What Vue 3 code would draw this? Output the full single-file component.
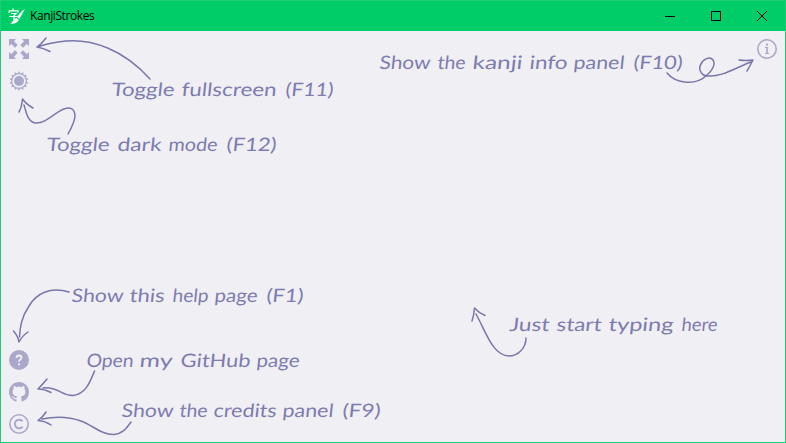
<script setup>
const leftTop = ['fullscreen', 'theme']
const leftBottom = ['help', 'github', 'credits']

// Each word is [text, left, width]
const notes = [
  { y: 95.6, words: [['Toggle', 111, 63], ['fullscreen', 181, 95], ['(F11)', 285, 48]] },
  { y: 150.6, words: [['Toggle', 46, 63], ['dark', 117, 44], ['mode', 168, 49], ['(F12)', 226, 50]] },
  { y: 68.6, words: [['Show', 379, 51], ['the', 437, 28], ['kanji', 472, 50], ['info', 529, 38], ['panel', 573, 51], ['(F10)', 633, 49]] },
  { y: 301.6, words: [['Show', 71, 52], ['this', 129, 35], ['help', 172, 36], ['page', 214, 43], ['(F1)', 266, 37]] },
  { y: 366.6, words: [['Open', 86, 47], ['my', 139, 33], ['GitHub', 180, 70], ['page', 256, 43]] },
  { y: 416.6, words: [['Show', 121, 52], ['the', 179, 28], ['credits', 213, 63], ['panel', 282, 51], ['(F9)', 342, 38]] },
  { y: 330.6, words: [['Just', 509, 40], ['start', 556, 45], ['typing', 608, 65], ['here', 681, 36]] },
]

const arrows = [
  'M150 79C123 49 92 39 66 41C56 42 46 44 37 47M46 38C43 42 40 45 37 47Q43 48 50 51.500',
  'M68 134C72 127 75 121 75 115C74 108 70 107 64 109C55 112 46 124 35 123C27 121 26 111 24 105M19 112C22 107 22 104 22.500 99Q26 104 33 108',
  'M667 73C676 84 696 86 707 75C712 71 716 64 713 60C710 56 703 59 701 64C698 69 701 76 708 76C722 77 735 68 751 62M739 60Q746 61 753 60Q750 66 747 71',
  'M69 292C50 286 36 294 29 306C21 318 20 328 19.500 337M13.500 331Q18 336 19 342Q22 336 28 332',
  'M94.500 371C90 382 86 394 73 395.500C62 396 57 386 43 388M47 379Q43 384 38 389Q44 389 51 392.500',
  'M131 422C126 429 122 434 114 434.500C102 435 94 426 81 421C70 417 57 416 42 419M46 412Q43 417 38 420.500Q45 421 51 425',
  'M526 338C526 348 518 356 509 356C493 356 486 332 476 314M472 321Q474 315 474.500 308Q479 313 485 315.500',
]
const rays = Array.from({ length: 14 }, (_, i) => (i * 360) / 14)
</script>

<template>
  <div class="window">
    <header class="titlebar">
      <svg class="logo" width="18" height="18" viewBox="0 0 18 18">
        <g fill="none" stroke="#fff" stroke-width="1.200">
          <path d="M5 .5V2.500M1.200 5V2.900H10V4.500M3 5.500H8L6 7.500V13Q6 14.500 3.500 14M1 8.500H9" />
        </g>
        <path d="M17 .8L11.300 11L8.800 9L13.500 3.500ZM8.300 10L10.800 12Q9 16 2 16Q5 14.500 5.700 12.500Q6.500 10 8.300 10Z" fill="#fff" />
      </svg>
      <span class="title">KanjiStrokes</span>
      <div class="controls">
        <button aria-label="Minimize"><svg width="10" height="10"><path d="M0 5.500H10" /></svg></button>
        <button aria-label="Maximize"><svg width="10" height="10"><path d="M.5.5H9.500V9.500H.5Z" /></svg></button>
        <button aria-label="Close"><svg width="10" height="10"><path d="M0 0L10 10M10 0L0 10" /></svg></button>
      </div>
    </header>

    <main class="content">
      <nav class="side">
        <div class="group">
          <button v-for="name in leftTop" :key="name" :aria-label="name">
            <svg v-if="name === 'fullscreen'" width="20" height="20" viewBox="0 0 20 20">
              <g v-for="a in [0, 90, 180, 270]" :key="a" :transform="`rotate(${a} 10 10)`">
                <path d="M0 0H7L5 2.300L8.700 6L6 8.700L2.300 5L0 7Z" fill="currentColor" />
              </g>
            </svg>
            <svg v-else width="20" height="20" viewBox="0 0 20 20">
              <circle cx="10" cy="10" r="5" fill="currentColor" />
              <circle cx="10" cy="10" r="7.400" fill="none" stroke="currentColor" stroke-width="1.100" />
              <path v-for="a in rays" :key="a" d="M8.600 2.700L10 .1L11.400 2.700Z" fill="currentColor" :transform="`rotate(${a} 10 10)`" />
            </svg>
          </button>
        </div>
        <div class="group">
          <button v-for="name in leftBottom" :key="name" :aria-label="name">
            <svg v-if="name === 'help'" width="20" height="20" viewBox="0 0 20 20">
              <circle cx="10" cy="10" r="10" fill="currentColor" />
              <path d="M7.500 7.900Q7.600 5.500 10 5.500Q12.500 5.500 12.500 7.600Q12.500 8.700 11 9.700Q10 10.300 10 11.800" fill="none" stroke="#f0eff4" stroke-width="1.800" />
              <circle cx="10" cy="14.300" r="1.150" fill="#f0eff4" />
            </svg>
            <svg v-else-if="name === 'github'" width="20" height="20" viewBox="0 0 16 16">
              <path fill="currentColor" d="M8 0C3.580 0 0 3.580 0 8c0 3.540 2.290 6.530 5.470 7.590.4.070.55-.17.55-.38 0-.19-.01-.82-.01-1.490-2.010.37-2.530-.49-2.690-.94-.09-.23-.48-.94-.82-1.130-.28-.15-.68-.52-.01-.53.63-.01 1.080.58 1.230.82.72 1.210 1.870.87 2.330.66.07-.52.28-.87.51-1.070-1.780-.2-3.640-.89-3.640-3.950 0-.87.31-1.590.82-2.150-.08-.2-.36-1.020.08-2.120 0 0 .67-.21 2.200.82.64-.18 1.320-.27 2-.27s1.360.09 2 .27c1.530-1.040 2.200-.82 2.200-.82.44 1.100.16 1.920.08 2.120.51.56.82 1.270.82 2.150 0 3.070-1.870 3.750-3.650 3.950.29.25.54.73.54 1.480 0 1.070-.01 1.930-.01 2.200 0 .21.15.46.55.38A8.010 8.010 0 0 0 16 8c0-4.420-3.580-8-8-8Z" />
            </svg>
            <svg v-else width="20" height="20" viewBox="0 0 20 20" fill="none" stroke="currentColor">
              <circle cx="10" cy="10" r="9.200" stroke-width="1.600" />
              <path d="M13.600 7.400A4.300 4.300 0 1 0 13.600 12.600" stroke-width="1.900" />
            </svg>
          </button>
        </div>
      </nav>
      <button class="info" aria-label="info">
        <svg width="20" height="20" viewBox="0 0 20 20">
          <circle cx="10" cy="10" r="9.200" fill="none" stroke="currentColor" stroke-width="1.600" />
          <path d="M8 8H10.800V14H12.200V15H8V14H9.200V9H8Z" fill="currentColor" />
          <circle cx="10" cy="5.700" r="1.150" fill="currentColor" />
        </svg>
      </button>
    </main>

    <svg class="notes" width="786" height="443" viewBox="0 0 786 443">
      <path v-for="(d, i) in arrows" :key="i" :d="d" class="arrow" />
      <text v-for="(note, i) in notes" :key="i" :transform="`translate(0 ${note.y}) skewX(-6)`">
        <tspan
          v-for="([word, x, width], j) in note.words"
          :key="j"
          :x="x"
          :textLength="width"
          lengthAdjust="spacingAndGlyphs"
        >{{ word }}</tspan>
      </text>
    </svg>
  </div>
</template>

<style>
body {
  overflow: hidden;
}
</style>

<style scoped>
.window {
  position: relative;
  display: flex;
  flex-direction: column;
  box-sizing: border-box;
  width: 100vw;
  height: 100vh;
  border: 1px solid #1bce77;
  background: #f0eff4;
}
.titlebar {
  display: flex;
  align-items: center;
  flex: 0 0 30px;
  padding-left: 7px;
  background: #00cd68;
}
.logo {
  margin-top: 1px;
}
.title {
  margin-left: 4px;
  font: 12px/16px "Open Sans", "Noto Sans", sans-serif;
  letter-spacing: -0.4px;
  color: #000;
}
.controls {
  display: flex;
  margin-left: auto;
}
button {
  display: flex;
  align-items: center;
  justify-content: center;
  padding: 0;
  border: 0;
  background: none;
  color: #a9a8ca;
}
.controls button {
  width: 46px;
  height: 28px;
}
.controls path {
  fill: none;
  stroke: #000;
  stroke-width: 1;
}
.content {
  display: flex;
  flex: 1;
  justify-content: space-between;
  align-items: flex-start;
  padding: 8px;
}
.side {
  display: flex;
  flex-direction: column;
  justify-content: space-between;
  align-self: stretch;
}
.group {
  display: flex;
  flex-direction: column;
  gap: 12px;
}
.notes {
  position: absolute;
  top: -1px;
  left: -1px;
  pointer-events: none;
}
.notes text {
  font-family: Lato, sans-serif;
  font-size: 18.5px;
  fill: #7d7baf;
}
.arrow {
  fill: none;
  stroke: #7976ab;
  stroke-width: 1.5;
  stroke-linecap: round;
  stroke-linejoin: round;
}
</style>
